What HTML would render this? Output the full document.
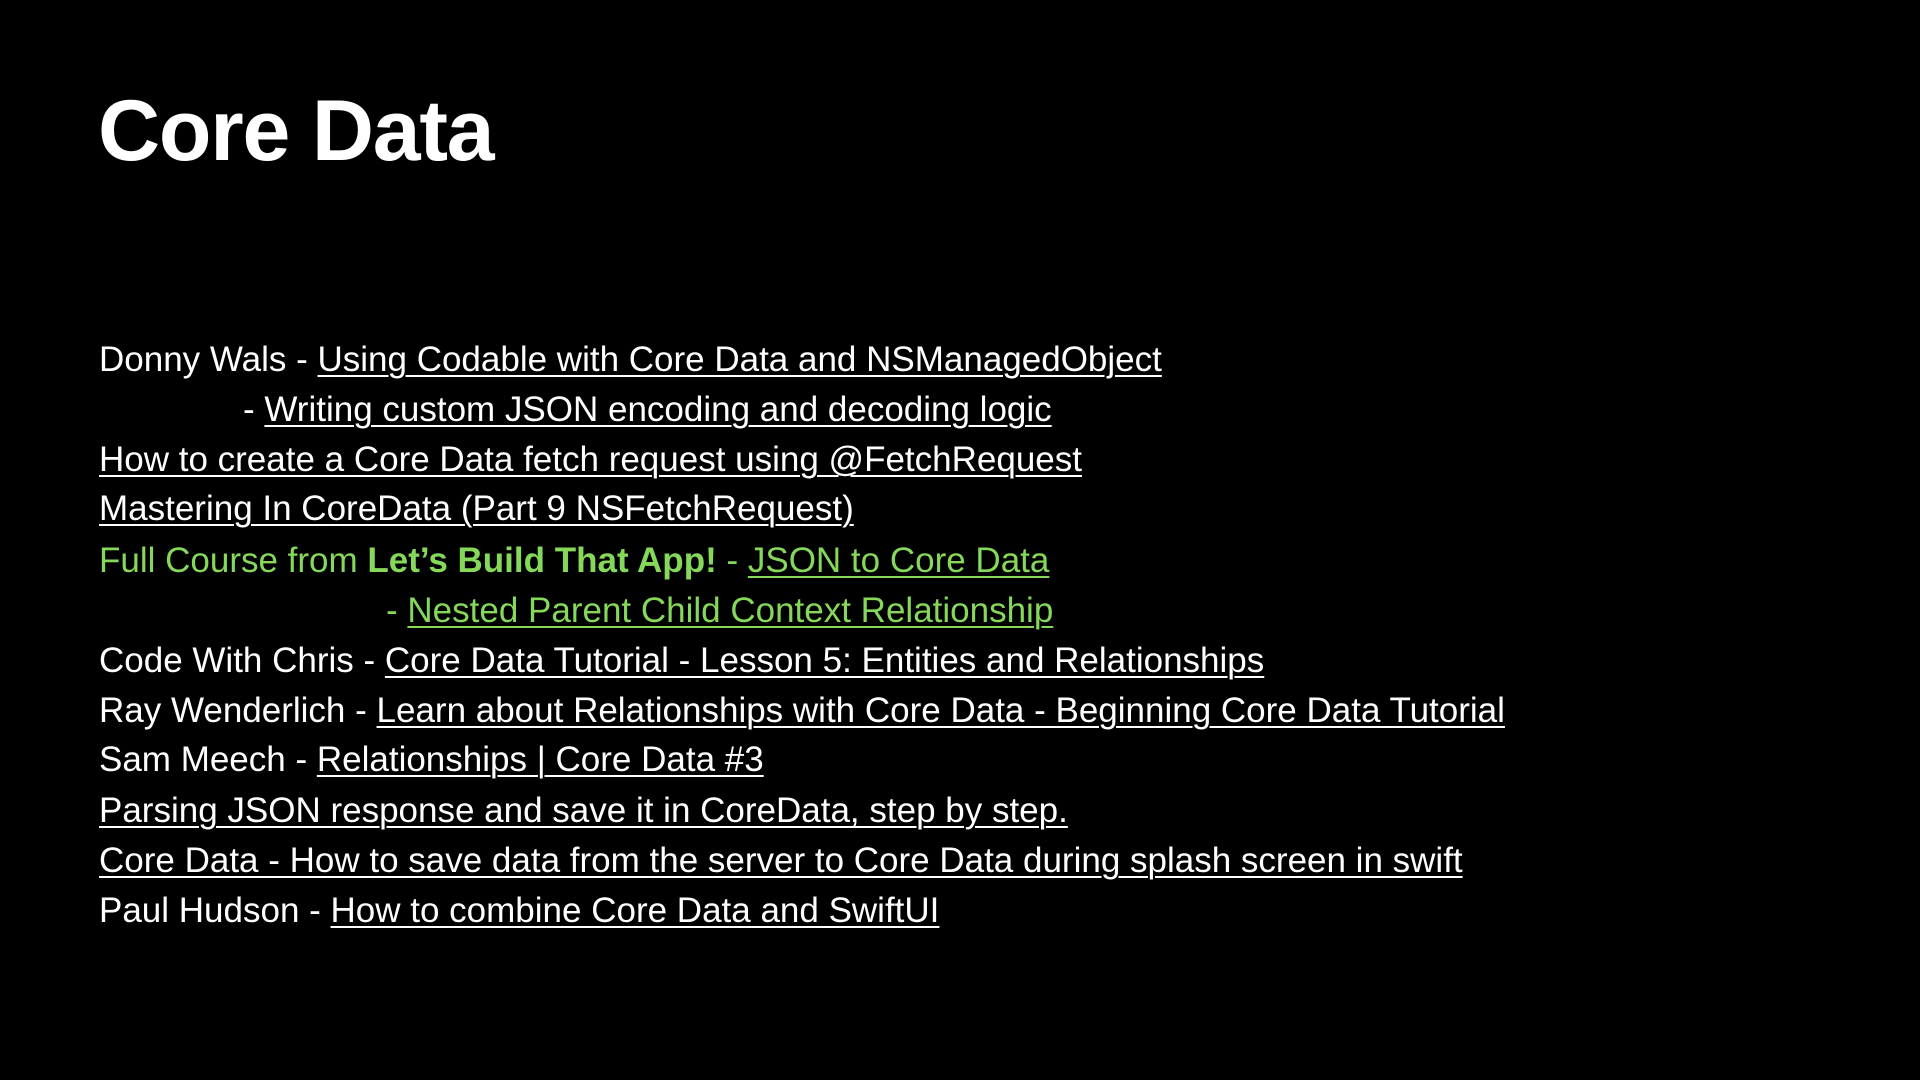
<!DOCTYPE html>
<html><head><meta charset="utf-8"><style>
html,body{margin:0;padding:0;background:#000;}
body{width:1920px;height:1080px;position:relative;overflow:hidden;font-family:"Liberation Sans",Arial,sans-serif;color:#fff;}
h1{position:absolute;left:98px;top:88px;margin:0;font-size:86px;line-height:86px;font-weight:bold;letter-spacing:-1.2px;}
.l{position:absolute;left:99px;font-size:35px;line-height:50px;white-space:nowrap;}
u{text-decoration:underline;text-decoration-thickness:2px;text-underline-offset:4px;}
.g{color:#86d85a;}
</style></head><body>
<h1>Core Data</h1>
<div class="l" style="top:335px">Donny Wals - <u>Using Codable with Core Data and NSManagedObject</u></div>
<div class="l" style="top:385px;left:243px">- <u>Writing custom JSON encoding and decoding logic</u></div>
<div class="l" style="top:435px"><u>How to create a Core Data fetch request using @FetchRequest</u></div>
<div class="l" style="top:484px"><u>Mastering In CoreData (Part 9 NSFetchRequest)</u></div>
<div class="l g" style="top:536px">Full Course from <b>Let’s Build That App!</b> - <u>JSON to Core Data</u></div>
<div class="l g" style="top:586px;left:386px">- <u>Nested Parent Child Context Relationship</u></div>
<div class="l" style="top:636px">Code With Chris - <u>Core Data Tutorial - Lesson 5: Entities and Relationships</u></div>
<div class="l" style="top:686px">Ray Wenderlich - <u>Learn about Relationships with Core Data - Beginning Core Data Tutorial</u></div>
<div class="l" style="top:735px">Sam Meech - <u>Relationships | Core Data #3</u></div>
<div class="l" style="top:786px"><u>Parsing JSON response and save it in CoreData, step by step.</u></div>
<div class="l" style="top:836px"><u>Core Data - How to save data from the server to Core Data during splash screen in swift</u></div>
<div class="l" style="top:886px">Paul Hudson - <u>How to combine Core Data and SwiftUI</u></div>
</body></html>
